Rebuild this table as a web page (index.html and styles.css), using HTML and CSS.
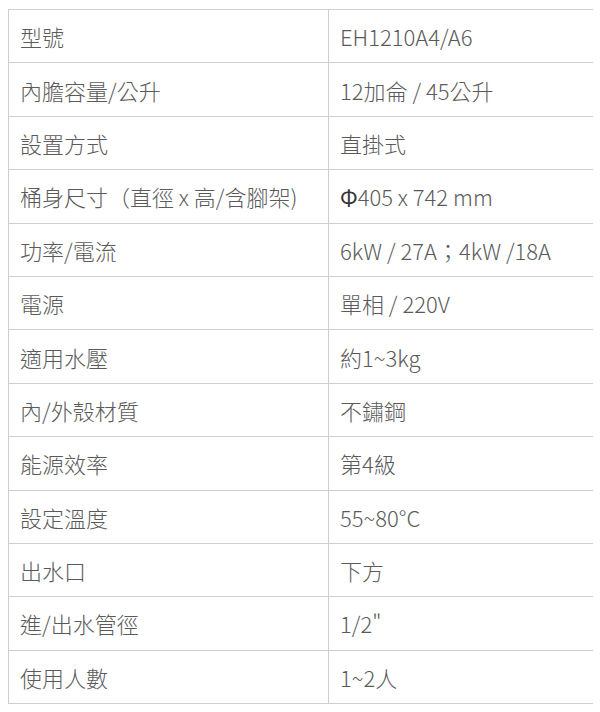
FILE: index.html
```html
<!DOCTYPE html>
<html lang="zh-Hant">
<head>
<meta charset="utf-8">
<link rel="stylesheet" href="styles.css">
</head>
<body>
<table class="spec">
  <tr><td class="k">型號</td><td class="v">EH1210A4/A6</td></tr>
  <tr><td class="k">內膽容量/公升</td><td class="v">12加侖 / 45公升</td></tr>
  <tr><td class="k">設置方式</td><td class="v">直掛式</td></tr>
  <tr><td class="k">桶身尺寸（直徑 x 高/含腳架)</td><td class="v"><span class="phi">Φ</span>405 x 742 mm</td></tr>
  <tr><td class="k">功率/電流</td><td class="v">6kW / 27A；4kW /18A</td></tr>
  <tr><td class="k">電源</td><td class="v">單相 / 220V</td></tr>
  <tr><td class="k">適用水壓</td><td class="v">約1~3kg</td></tr>
  <tr><td class="k">內/外殼材質</td><td class="v">不鏽鋼</td></tr>
  <tr><td class="k">能源效率</td><td class="v">第4級</td></tr>
  <tr><td class="k">設定溫度</td><td class="v">55~80°C</td></tr>
  <tr><td class="k">出水口</td><td class="v">下方</td></tr>
  <tr><td class="k">進/出水管徑</td><td class="v">1/2"</td></tr>
  <tr><td class="k">使用人數</td><td class="v">1~2人</td></tr>
</table>
</body>
</html>
```
FILE: styles.css
```css
html, body {
  background: #ffffff;
}
body {
  margin: 9px 7px 0 8px;
  font-family: "Noto Sans CJK TC", "Noto Sans", sans-serif;
  color: #5a5a5a;
}
.spec {
  border-collapse: collapse;
  width: 586px;
  table-layout: fixed;
}
.spec td {
  border: 1px solid #cfcfcf;
  height: 52.4px;
  padding: 0 0 0 11px;
  font-size: 22px;
  font-weight: 300;
  vertical-align: middle;
  white-space: nowrap;
}
.spec td.k {
  width: 308px;
}
.spec td.v {
  padding-left: 11px;
}
.phi {
  color: #333;
  font-weight: 400;
}
```
